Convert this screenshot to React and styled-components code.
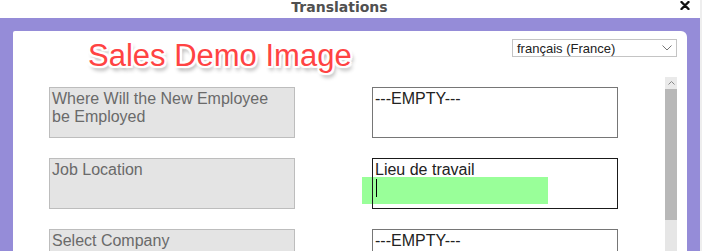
import React from "react";
import styled, { createGlobalStyle } from "styled-components";

const GlobalStyle = createGlobalStyle`
  html, body { margin: 0; padding: 0; background: #fff; overflow: hidden; }
  * { box-sizing: border-box; }
`;

const Window = styled.div`
  width: 702px;
  height: 251px;
  overflow: hidden;
  display: flex;
  flex-direction: column;
  background: #fff;
  border-right: 2px solid #eeeeee;
  font-family: "Liberation Sans", Arial, sans-serif;
`;

const TitleBar = styled.div`
  position: relative;
  height: 18px;
  flex: none;
  display: flex;
  justify-content: center;
  padding-right: 21px;
`;

const Title = styled.div`
  font-family: "DejaVu Sans", Verdana, sans-serif;
  font-weight: bold;
  font-size: 14px;
  line-height: 14px;
  margin-top: 0;
  color: #505050;
`;

const Close = styled.svg`
  position: absolute;
  right: 10px;
  top: 1px;
  width: 10px;
  height: 9px;
`;

const Frame = styled.div`
  flex: 1;
  min-height: 0;
  display: flex;
  background: #958cd8;
  padding: 13px 13px 0 13px;
`;

const Panel = styled.div`
  flex: 1;
  display: flex;
  flex-direction: column;
  background: #fff;
  border-radius: 2px 6px 0 0;
`;

const Header = styled.div`
  height: 46px;
  flex: none;
  display: flex;
  justify-content: space-between;
  align-items: flex-start;
  padding: 7px 10px 0 75px;
`;

const Heading = styled.div`
  font-family: "Liberation Sans", Arial, sans-serif;
  font-size: 31px;
  line-height: 36px;
  color: #ff4343;
  white-space: nowrap;
  text-shadow:
    -1px -1px 0 #fff, 1px -1px 0 #fff, -1px 1px 0 #fff, 1px 1px 0 #fff,
    0 -2px 0 #fff, 0 2px 0 #fff, -2px 0 0 #fff, 2px 0 0 #fff,
    -2px -2px 1px #fff, 2px -2px 1px #fff, -2px 2px 1px #fff, 2px 2px 1px #fff,
    2px 4px 4px rgba(0, 0, 0, 0.45);
`;

const SelectBox = styled.div`
  margin-top: 1px;
  width: 165px;
  height: 18px;
  display: flex;
  align-items: center;
  justify-content: space-between;
  border: 1px solid #c4c4c4;
  padding: 0 4px 0 4px;
  font-size: 13px;
  color: #222;
  background: #fff;
`;

const Chevron = styled.svg`
  width: 10px;
  height: 6px;
`;

const Body = styled.div`
  flex: 1;
  min-height: 0;
  display: flex;
  padding: 0 10px 0 36px;
`;

const Rows = styled.div`
  display: flex;
  flex-direction: column;
  gap: 20px;
  padding-top: 10px;
`;

const Row = styled.div`
  display: flex;
  gap: 77px;
`;

const Label = styled.div`
  width: 246px;
  height: 51px;
  flex: none;
  background: #e4e4e4;
  border: 1px solid #bdbdbd;
  padding: 2px 14px 2px 2px;
  font-size: 16px;
  line-height: 18px;
  color: #6a6a6a;
`;

const FieldWrap = styled.div`
  position: relative;
  width: 246px;
  height: 51px;
  flex: none;
`;

const Highlight = styled.div`
  position: absolute;
  left: -10px;
  top: 19px;
  width: 186px;
  height: 27px;
  background: #99ff99;
`;

const TextBox = styled.div`
  position: relative;
  z-index: 1;
  height: 100%;
  border: 1px solid ${(p) => (p.$focused ? "#1a1a1a" : "#767676")};
  padding: 2px 2px;
  font-size: 16px;
  line-height: 18px;
  color: #222;
  background: transparent;
`;

const Caret = styled.span`
  display: block;
  width: 1px;
  height: 18px;
  margin-left: 1px;
  background: #000;
`;

const Scrollbar = styled.div`
  margin-left: auto;
  width: 12px;
  display: flex;
  flex-direction: column;
  background: #e6e6e6;
`;

const ScrollArrow = styled.div`
  height: 12px;
  display: flex;
  align-items: center;
  justify-content: center;
  background: #eaeaea;
`;

const Thumb = styled.div`
  height: 131px;
  background: #b8b8b8;
`;

const rows = [
  { label: "Where Will the New Employee be Employed", value: "---EMPTY---" },
  { label: "Job Location", value: "Lieu de travail", focused: true },
  { label: "Select Company", value: "---EMPTY---" },
];

export default function App() {
  return (
    <>
      <GlobalStyle />
      <Window>
        <TitleBar>
          <Title>Translations</Title>
          <Close viewBox="0 0 10 9">
            <path d="M1.5 1 L8.5 8 M8.5 1 L1.5 8" stroke="#111" strokeWidth="2.4" strokeLinecap="round" />
          </Close>
        </TitleBar>
        <Frame>
          <Panel>
            <Header>
              <Heading>Sales Demo Image</Heading>
              <SelectBox>
                <span>français (France)</span>
                <Chevron viewBox="0 0 10 6">
                  <path d="M0.5 0.5 L5 5 L9.5 0.5" fill="none" stroke="#777" strokeWidth="1" />
                </Chevron>
              </SelectBox>
            </Header>
            <Body>
              <Rows>
                {rows.map((r) => (
                  <Row key={r.label}>
                    <Label>{r.label}</Label>
                    <FieldWrap>
                      {r.focused && <Highlight />}
                      <TextBox $focused={r.focused}>
                        {r.value}
                        {r.focused && <Caret />}
                      </TextBox>
                    </FieldWrap>
                  </Row>
                ))}
              </Rows>
              <Scrollbar>
                <ScrollArrow>
                  <svg width="7" height="4" viewBox="0 0 7 4">
                    <path d="M0.5 3.5 L3.5 0.5 L6.5 3.5" fill="none" stroke="#888" strokeWidth="1" />
                  </svg>
                </ScrollArrow>
                <Thumb />
              </Scrollbar>
            </Body>
          </Panel>
        </Frame>
      </Window>
    </>
  );
}
